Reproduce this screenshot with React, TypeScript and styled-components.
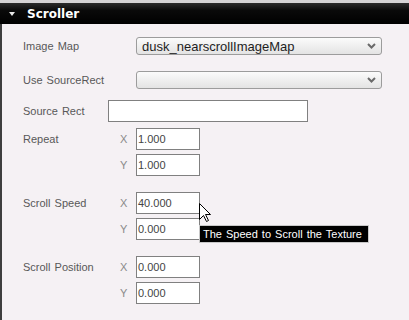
import React from "react";
import styled, { createGlobalStyle } from "styled-components";

const GlobalStyle = createGlobalStyle`
    html, body {
        margin: 0;
        padding: 0;
        background: #f5f1f4;
    }
    #root {
        width: 409px;
        height: 320px;
        overflow: hidden;
    }
`;

const RootDiv = styled.div`
    position: relative;
    display: flex;
    flex-direction: column;
    width: 409px;
    height: 320px;
    background: #f5f1f4;
    font-family: "Liberation Sans", Arial, sans-serif;
`;

const TopStrip = styled.div`
    height: 3px;
    background: #d6d4d6;
`;

const Header = styled.div`
    display: flex;
    align-items: center;
    height: 21px;
    background: linear-gradient(#2c2c2c, #0a0a0a 35%, #000 100%);
    color: #fff;
    font-family: "DejaVu Sans", sans-serif;
    font-weight: bold;
    font-size: 12px;
`;

const Caret = styled.span`
    width: 0;
    height: 0;
    margin: 1px 12px 0 9px;
    border-left: 3px solid transparent;
    border-right: 3px solid transparent;
    border-top: 4px solid #e8e8e8;
`;

const Body = styled.div`
    flex: 1;
    display: flex;
    flex-direction: column;
    border-left: 2px solid #3e3e3e;
    padding: 13px 0 0 21px;
`;

const Row = styled.div<{ $gap: number }>`
    display: flex;
    align-items: flex-start;
    margin-top: ${p => p.$gap}px;
`;

const Label = styled.span<{ $line: number }>`
    width: 85px;
    flex: none;
    line-height: ${p => p.$line}px;
    font-size: 11px;
    color: #585858;
    word-spacing: 1px;
    white-space: nowrap;
`;

const Select = styled.div`
    box-sizing: border-box;
    display: flex;
    align-items: center;
    justify-content: space-between;
    margin-left: 28px;
    width: 246px;
    height: 18px;
    padding: 0 5px 0 5px;
    border: 1px solid #9c9c9c;
    border-radius: 3px;
    background: linear-gradient(#fbfbfb, #e3e3e3);
    font-size: 13px;
    color: #1e1e1e;
`;

const TextBox = styled.div<{ $width: number }>`
    box-sizing: border-box;
    width: ${p => p.$width}px;
    height: 22px;
    padding-left: 1px;
    border: 1px solid #808080;
    background: #fff;
    font-size: 11px;
    line-height: 20px;
    color: #444;
`;

const AxisList = styled.div`
    display: flex;
    flex-direction: column;
    gap: 4px;
`;

const AxisRow = styled.div`
    display: flex;
    align-items: center;
`;

const AxisLabel = styled.span`
    width: 16px;
    padding-left: 12px;
    font-size: 11px;
    color: #8a8a8a;
`;

const Tooltip = styled.div`
    position: absolute;
    left: 199px;
    top: 225px;
    box-sizing: border-box;
    width: 170px;
    height: 18px;
    padding-left: 3px;
    border: 1px solid #c8c8c8;
    background: #000;
    color: #fff;
    font-size: 11px;
    line-height: 16px;
    word-spacing: 1px;
    white-space: nowrap;
`;

const Cursor = styled.svg`
    position: absolute;
    left: 199px;
    top: 203px;
`;

function Chevron() {
    return (
        <svg width="9" height="6" viewBox="0 0 9 6">
            <path d="M1 1 L4.5 4.5 L8 1" fill="none" stroke="#6a6a6a" strokeWidth="2" />
        </svg>
    );
}

interface AxisField {
    axis: string;
    value: string;
}

function VectorField({ label, gap, axes }: { label: string; gap: number; axes: AxisField[] }) {
    return (
        <Row $gap={gap}>
            <Label $line={22}>{label}</Label>
            <AxisList>
                {axes.map(a => (
                    <AxisRow key={a.axis}>
                        <AxisLabel>{a.axis}</AxisLabel>
                        <TextBox $width={64}>{a.value}</TextBox>
                    </AxisRow>
                ))}
            </AxisList>
        </Row>
    );
}

export default function App() {
    return (
        <RootDiv>
            <GlobalStyle />
            <TopStrip />
            <Header>
                <Caret />
                Scroller
            </Header>
            <Body>
                <Row $gap={0}>
                    <Label $line={18}>Image Map</Label>
                    <Select>
                        <span>dusk_nearscrollImageMap</span>
                        <Chevron />
                    </Select>
                </Row>
                <Row $gap={16}>
                    <Label $line={18}>Use SourceRect</Label>
                    <Select>
                        <span />
                        <Chevron />
                    </Select>
                </Row>
                <Row $gap={11}>
                    <Label $line={22}>Source Rect</Label>
                    <TextBox $width={200} />
                </Row>
                <VectorField
                    label="Repeat"
                    gap={6}
                    axes={[
                        { axis: "X", value: "1.000" },
                        { axis: "Y", value: "1.000" },
                    ]}
                />
                <VectorField
                    label="Scroll Speed"
                    gap={16}
                    axes={[
                        { axis: "X", value: "40.000" },
                        { axis: "Y", value: "0.000" },
                    ]}
                />
                <VectorField
                    label="Scroll Position"
                    gap={16}
                    axes={[
                        { axis: "X", value: "0.000" },
                        { axis: "Y", value: "0.000" },
                    ]}
                />
            </Body>
            <Tooltip>The Speed to Scroll the Texture</Tooltip>
            <Cursor width="13" height="20" viewBox="0 0 13 20">
                <path
                    d="M0.5 0.5 L0.5 16.5 L4.5 12.5 L7.5 18.5 L9.5 17.5 L6.5 11.5 L11.5 11.5 Z"
                    fill="#fff"
                    stroke="#000"
                    strokeWidth="1"
                />
            </Cursor>
        </RootDiv>
    );
}
